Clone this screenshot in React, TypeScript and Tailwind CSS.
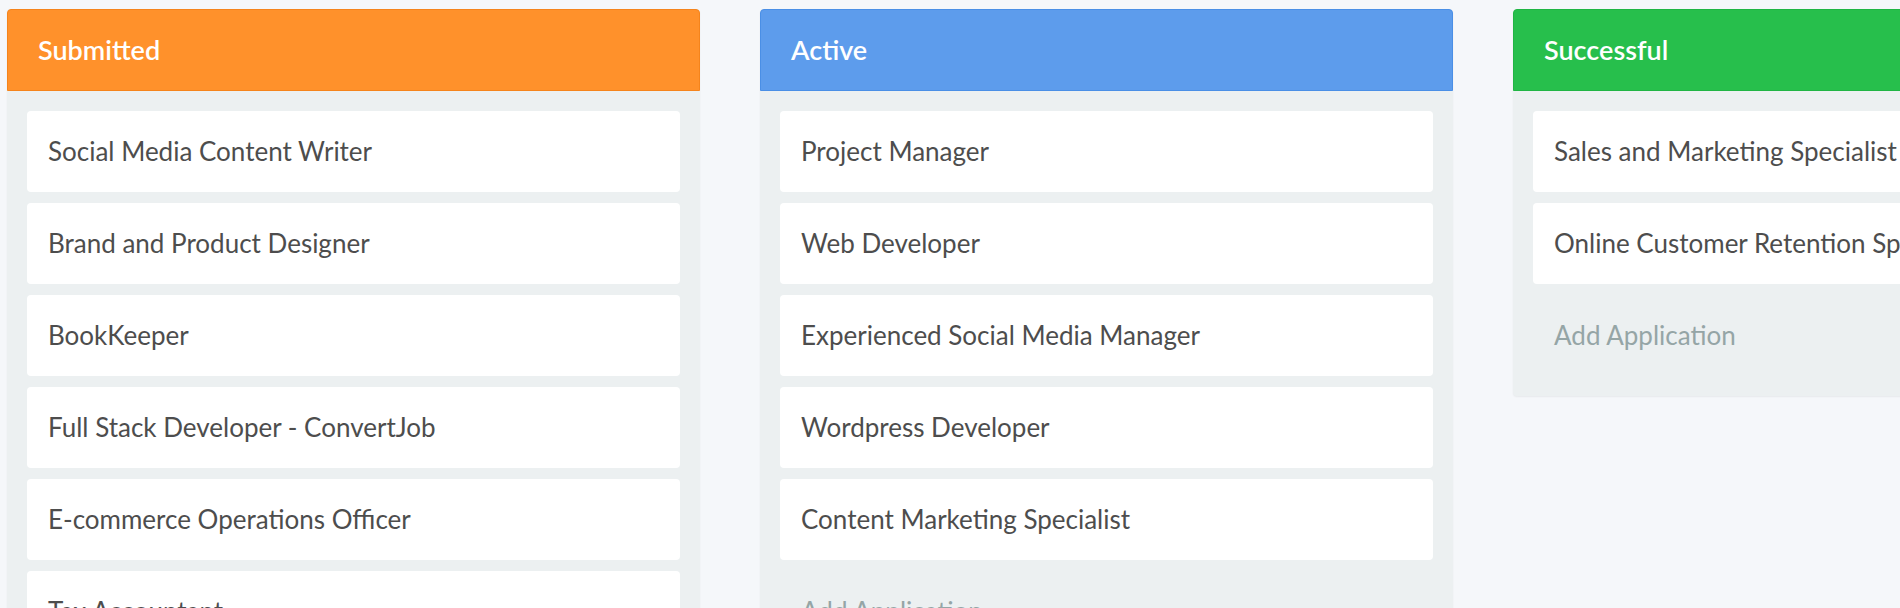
import React from 'react'

type Column = {
  title: string
  header: string
  cards: string[]
}

const columns: Column[] = [
  {
    title: 'Submitted',
    header: 'bg-[#ff912b] border-[#f5841c]',
    cards: [
      'Social Media Content Writer',
      'Brand and Product Designer',
      'BookKeeper',
      'Full Stack Developer - ConvertJob',
      'E-commerce Operations Officer',
      'Tax Accountant',
    ],
  },
  {
    title: 'Active',
    header: 'bg-[#5d9cec] border-[#4a8fe6]',
    cards: [
      'Project Manager',
      'Web Developer',
      'Experienced Social Media Manager',
      'Wordpress Developer',
      'Content Marketing Specialist',
    ],
  },
  {
    title: 'Successful',
    header: 'bg-[#27bf4c] border-[#20b544]',
    cards: ['Sales and Marketing Specialist', 'Online Customer Retention Specialist'],
  },
]

function BoardColumn({ column }: { column: Column }) {
  return (
    <div className="w-[693px] shrink-0 rounded-[4px] bg-[#ecf0f1] shadow-[0_1px_2px_rgba(0,0,0,0.06)]">
      <div
        className={`h-[82px] flex items-center px-[30px] rounded-t-[4px] border ${column.header} text-white text-[27px] font-semibold`}
      >
        {column.title}
      </div>
      <div className="flex flex-col gap-[11px] p-[20px]">
        {column.cards.map((card) => (
          <div
            key={card}
            className="h-[81px] shrink-0 flex items-center px-[21px] bg-white rounded-[4px] text-[#4d4d4d] text-[26px] whitespace-nowrap overflow-hidden"
          >
            {card}
          </div>
        ))}
        <div className="h-[81px] shrink-0 flex items-center px-[21px] text-[#95a5a6] text-[26px] whitespace-nowrap">
          Add Application
        </div>
      </div>
    </div>
  )
}

export default function App() {
  return (
    <div
      className="h-screen w-full overflow-hidden bg-[#f5f7fa]"
      style={{ fontFamily: 'Lato, "Open Sans", sans-serif' }}
    >
      <div className="flex items-start gap-[60px] pl-[7px] pt-[9px]">
        {columns.map((column) => (
          <BoardColumn key={column.title} column={column} />
        ))}
      </div>
    </div>
  )
}
